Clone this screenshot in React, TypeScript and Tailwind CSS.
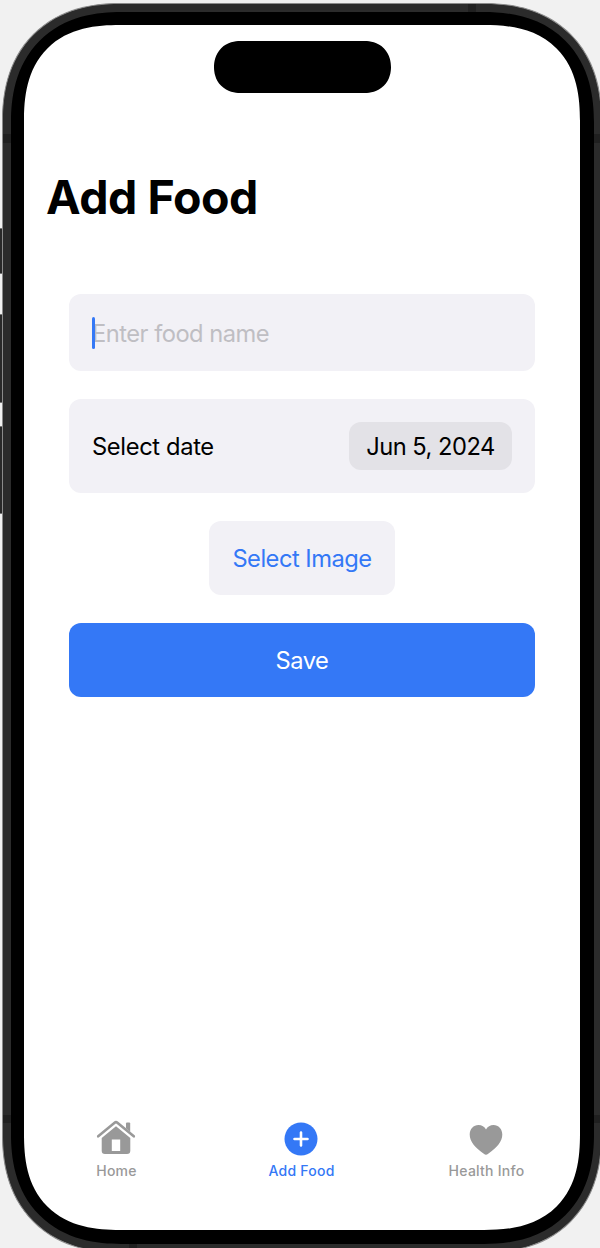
import React from "react";

function HomeIcon() {
  return (
    <svg className="mb-px" width="40" height="36" viewBox="0 0 40 36" fill="none">
      <path d="M2.2 17.3 18.6 3.7Q20 2.5 21.4 3.7L37.8 17.3" stroke="#999" strokeWidth="2.6" strokeLinecap="round" />
      <path d="M30 4.6q0-1 1-1h2.2q1 0 1 1v8.1L30 9.2Z" fill="#999" />
      <path fillRule="evenodd" d="M5.7 19.1 20 7.300l14.300 11.800v12.600q0 3.300-3.300 3.300H9q-3.300 0-3.300-3.300ZM15.800 20.500v11.500h8.400V20.500Z" fill="#999" />
    </svg>
  );
}

function AddIcon() {
  return (
    <svg width="34" height="34" viewBox="0 0 34 34" fill="none">
      <circle cx="17" cy="17" r="16.5" fill="#3478f6" />
      <path d="M17 10.500v13M10.500 17h13" stroke="#fff" strokeWidth="2.6" strokeLinecap="round" />
    </svg>
  );
}

function HeartIcon() {
  return (
    <svg width="34" height="32" viewBox="0 0 34 32" fill="#999">
      <path d="M17 30.7c-.6 0-1.400-.5-2.200-1C6.500 24.200.7 18 .7 10.600.7 5 4.500 1 9.500 1 12.800 1 15.500 2.700 17 5.500 18.500 2.700 21.200 1 24.500 1c5 0 8.800 4 8.800 9.600 0 7.400-5.800 13.600-14.100 19.100-.8.5-1.600 1-2.200 1Z" />
    </svg>
  );
}

function TabItem({ icon, label, active }: { icon: React.ReactNode; label: string; active?: boolean }) {
  return (
    <button className={`flex flex-1 flex-col items-center ${active ? "text-[#3478f6]" : "text-[#999]"}`}>
      <span className="flex h-[38px] items-end justify-center pr-px">{icon}</span>
      <span className="mt-[5px] text-[14px] font-medium leading-[20px] tracking-[0.25px] whitespace-nowrap">{label}</span>
    </button>
  );
}

function Screen() {
  return (
    <div className="flex h-[1205px] w-[556px] flex-col overflow-hidden rounded-[96px] bg-white text-black [corner-shape:superellipse(1.31)]">
      <div className="mx-auto mt-4 h-[52px] w-[177px] shrink-0 rounded-[27px] bg-black [corner-shape:superellipse(1.1)]" />
      <h1 className="mt-[74px] pl-[22px] text-[46.500px] font-bold leading-[60px] tracking-[-0.45px]">Add Food</h1>
      <form className="mx-[45px] mt-[67px] flex flex-col items-center gap-[28px] text-[23.700px] leading-[30px] tracking-[-0.5px]">
        <div className="flex h-[77px] w-full items-center rounded-xl bg-[#f2f1f6] pl-[23px] text-[#bfbec3]">
          <span className="relative z-10 h-8 w-[3px] rounded-full bg-[#3478f6]" />
          <span className="-ml-[3px] pt-[2px]">Enter food name</span>
        </div>
        <div className="flex h-[94px] w-full items-center justify-between rounded-xl bg-[#f2f1f6] px-[23px]">
          <span className="pt-[2px] tracking-[-0.35px]">Select date</span>
          <button type="button" className="h-12 w-[163px] rounded-xl bg-[#e3e2e7] pt-[2px]">Jun 5, 2024</button>
        </div>
        <button type="button" className="h-[74px] w-[186px] rounded-xl bg-[#f2f1f6] pt-[2px] text-[#3478f6]">Select Image</button>
        <button type="button" className="h-[74px] w-full rounded-xl bg-[#3478f6] pt-[2px] text-white">Save</button>
      </form>
      <nav className="mr-px mt-auto mb-[49px] flex">
        <TabItem icon={<HomeIcon />} label="Home" />
        <TabItem icon={<AddIcon />} label="Add Food" active />
        <TabItem icon={<HeartIcon />} label="Health Info" />
      </nav>
    </div>
  );
}

export default function App() {
  return (
    <div className="relative flex h-[1248px] w-[600px] items-start overflow-hidden bg-[#f1f1f1] font-['Inter','Liberation_Sans',sans-serif]">
      <span className="absolute left-0 top-[228px] h-[46px] w-[3px] border-y border-[#777] bg-[#292929]" />
      <span className="absolute left-0 top-[314px] h-[89px] w-[3px] border-y border-[#777] bg-[#292929]" />
      <span className="absolute left-0 top-[426px] h-[88px] w-[3px] border-y border-[#777] bg-[#292929]" />
      <div className="relative ml-[2px] mt-[3px] h-[1250px] w-[600px] shrink-0 overflow-hidden rounded-[118px] border border-[#8b8b8b] bg-[#2b2b2b] p-[7.500px] pt-[8px] [corner-shape:superellipse(1.18)]">
        <span className="absolute inset-x-0 top-[130px] h-[9px] bg-[#202020]" />
        <span className="absolute inset-x-0 top-[1111px] h-[8px] bg-[#202020]" />
        <span className="absolute left-[465px] top-0 h-[9px] w-[8px] bg-[#202020]" />
        <span className="absolute bottom-0 left-[126px] h-[9px] w-[8px] bg-[#202020]" />
        <div className="relative h-[1232px] w-[583px] rounded-[110px] bg-black px-[13.500px] pt-[13px] [corner-shape:superellipse(1.2)]">
          <Screen />
        </div>
      </div>
    </div>
  );
}
